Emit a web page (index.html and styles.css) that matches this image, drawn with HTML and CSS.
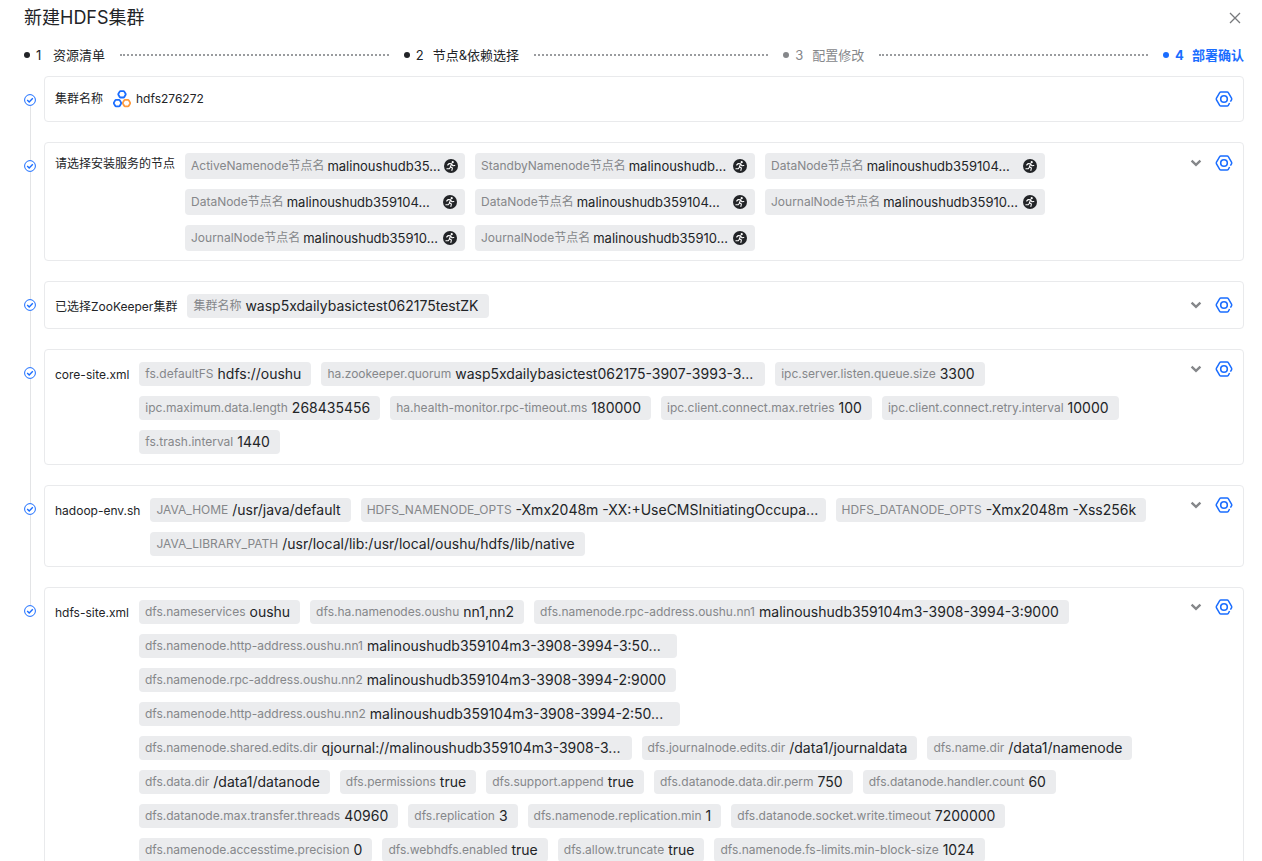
FILE: index.html
```html
<!DOCTYPE html>
<html lang="zh-CN">
<head>
    <meta charset="UTF-8">
    <meta name="viewport" content="width=device-width, initial-scale=1.0">
    <title>新建HDFS集群</title>
    <link rel="stylesheet" href="styles.css">
</head>
<body>
    <svg class="sprite" aria-hidden="true">
        <symbol id="check" viewBox="0 0 12 12">
            <circle cx="6" cy="6" r="5.4" fill="#fff" stroke="#1a6dff" stroke-width="1"/>
            <path d="M3.2 6l2 2 3.6-3.7" fill="none" stroke="#1a6dff" stroke-width="1.4"/>
        </symbol>
        <symbol id="gear" viewBox="0 0 18 18">
            <path d="M14.6 13l-1.300 2.300q-.4.700-1.200.7H5.900q-.8 0-1.200-.7L1.500 10q-.5-1 0-2l3.200-5.300q.4-.7 1.200-.7h6.200q.8 0 1.200.7L16.500 8q.5 1 0 2l-1.100 1.700" fill="none" stroke="#1a6dff" stroke-width="1.500"/>
            <circle cx="9" cy="9" r="3.300" fill="none" stroke="#1a6dff" stroke-width="1.600"/>
        </symbol>
        <symbol id="arrow" viewBox="0 0 12 12">
            <path d="M1.600 3.700L6 7.900l4.400-4.200" fill="none" stroke="#85878a" stroke-width="2.400"/>
        </symbol>
        <symbol id="runner" viewBox="0 0 14 14">
            <circle cx="7" cy="7" r="7" fill="#222427"/>
            <circle cx="8.700" cy="3.200" r="1.100" fill="#fff"/>
            <path d="M3.700 6l1.500-1.500 2.500.4-1.300 2.900 2 1.200-.5 2.400M6.300 8.300L5.300 9.700H2.900M7.800 5.300l1.200 1.500 1.800-.3" fill="none" stroke="#fff" stroke-width="1.100" stroke-linejoin="round" stroke-linecap="round"/>
        </symbol>
    </svg>

    <div class="drawer">
        <header class="header">
            <h1 class="title">新建HDFS集群</h1>
            <button class="icon-btn close" type="button" aria-label="关闭">
                <svg width="12" height="12" viewBox="0 0 12 12"><path d="M1 1l10 10M11 1L1 11" stroke="#77797c" stroke-width="1.3"/></svg>
            </button>
        </header>

        <ol class="steps">
            <li class="step"><span class="dot"></span><span class="num">1</span><span>资源清单</span><span class="step-line"></span></li>
            <li class="step"><span class="dot"></span><span class="num">2</span><span>节点&amp;依赖选择</span><span class="step-line"></span></li>
            <li class="step muted"><span class="dot"></span><span class="num">3</span><span>配置修改</span><span class="step-line"></span></li>
            <li class="step active"><span class="dot"></span><span class="num">4</span><span>部署确认</span></li>
        </ol>

        <main class="timeline">
            <section class="item">
                <div class="rail"><svg class="check"><use href="#check"/></svg></div>
                <div class="card card-name">
                    <h2 class="label">集群名称</h2>
                    <div class="cluster">
                        <svg width="18" height="18" viewBox="0 0 18 18" fill="none" stroke-width="1.800">
                            <path d="M7.500 1.100h3q.5 0 .8.500l1.300 2.200q.3.500 0 1l-1.300 2.200q-.3.500-.8.500h-3q-.5 0-.8-.5L5.400 4.800q-.3-.5 0-1l1.300-2.200q.3-.5.8-.5z" stroke="#1a6dff"/>
                            <path d="M3 9.900h3q.5 0 .8.500l1.300 2.200q.3.500 0 1l-1.300 2.200q-.3.500-.8.500H3q-.5 0-.8-.5L.9 13.600q-.3-.5 0-1l1.300-2.200q.3-.5.8-.5z" stroke="#1a6dff"/>
                            <path d="M12 9.900h3q.5 0 .8.500l1.300 2.200q.3.500 0 1l-1.300 2.200q-.3.500-.8.500h-3q-.5 0-.8-.5l-1.300-2.200q-.3-.5 0-1l1.300-2.200q.3-.5.8-.5z" stroke="#ff9a3c"/>
                        </svg>
                        <span>hdfs276272</span>
                    </div>
                    <div class="actions">
                        <button class="icon-btn" type="button" aria-label="设置"><svg class="gear"><use href="#gear"/></svg></button>
                    </div>
                </div>
            </section>

            <section class="item">
                <div class="rail"><svg class="check"><use href="#check"/></svg></div>
                <div class="card card-nodes">
                    <h2 class="label">请选择安装服务的节点</h2>
                    <ul class="tags">
                        <li class="tag"><span class="key">ActiveNamenode节点名</span><span class="value">malinoushudb35...</span><svg class="runner"><use href="#runner"/></svg></li>
                        <li class="tag"><span class="key">StandbyNamenode节点名</span><span class="value">malinoushudb...</span><svg class="runner"><use href="#runner"/></svg></li>
                        <li class="tag"><span class="key">DataNode节点名</span><span class="value">malinoushudb359104...</span><svg class="runner"><use href="#runner"/></svg></li>
                        <li class="tag"><span class="key">DataNode节点名</span><span class="value">malinoushudb359104...</span><svg class="runner"><use href="#runner"/></svg></li>
                        <li class="tag"><span class="key">DataNode节点名</span><span class="value">malinoushudb359104...</span><svg class="runner"><use href="#runner"/></svg></li>
                        <li class="tag"><span class="key">JournalNode节点名</span><span class="value">malinoushudb35910...</span><svg class="runner"><use href="#runner"/></svg></li>
                        <li class="tag"><span class="key">JournalNode节点名</span><span class="value">malinoushudb35910...</span><svg class="runner"><use href="#runner"/></svg></li>
                        <li class="tag"><span class="key">JournalNode节点名</span><span class="value">malinoushudb35910...</span><svg class="runner"><use href="#runner"/></svg></li>
                    </ul>
                    <div class="actions">
                        <button class="icon-btn" type="button" aria-label="展开"><svg class="arrow"><use href="#arrow"/></svg></button>
                        <button class="icon-btn" type="button" aria-label="设置"><svg class="gear"><use href="#gear"/></svg></button>
                    </div>
                </div>
            </section>

            <section class="item">
                <div class="rail"><svg class="check"><use href="#check"/></svg></div>
                <div class="card card-config card-zk">
                    <h2 class="label">已选择ZooKeeper集群</h2>
                    <ul class="tags">
                        <li class="tag"><span class="key">集群名称</span><span class="value">wasp5xdailybasictest062175testZK</span></li>
                    </ul>
                    <div class="actions">
                        <button class="icon-btn" type="button" aria-label="展开"><svg class="arrow"><use href="#arrow"/></svg></button>
                        <button class="icon-btn" type="button" aria-label="设置"><svg class="gear"><use href="#gear"/></svg></button>
                    </div>
                </div>
            </section>

            <section class="item">
                <div class="rail"><svg class="check"><use href="#check"/></svg></div>
                <div class="card card-config">
                    <h2 class="label">core-site.xml</h2>
                    <ul class="tags">
                        <li class="tag"><span class="key">fs.defaultFS</span><span class="value">hdfs://oushu</span></li>
                        <li class="tag"><span class="key">ha.zookeeper.quorum</span><span class="value long">wasp5xdailybasictest062175-3907-3993-3...</span></li>
                        <li class="tag"><span class="key">ipc.server.listen.queue.size</span><span class="value">3300</span></li>
                        <li class="tag"><span class="key">ipc.maximum.data.length</span><span class="value">268435456</span></li>
                        <li class="tag"><span class="key">ha.health-monitor.rpc-timeout.ms</span><span class="value">180000</span></li>
                        <li class="tag"><span class="key">ipc.client.connect.max.retries</span><span class="value">100</span></li>
                        <li class="tag"><span class="key">ipc.client.connect.retry.interval</span><span class="value">10000</span></li>
                        <li class="tag"><span class="key">fs.trash.interval</span><span class="value">1440</span></li>
                    </ul>
                    <div class="actions">
                        <button class="icon-btn" type="button" aria-label="展开"><svg class="arrow"><use href="#arrow"/></svg></button>
                        <button class="icon-btn" type="button" aria-label="设置"><svg class="gear"><use href="#gear"/></svg></button>
                    </div>
                </div>
            </section>

            <section class="item">
                <div class="rail"><svg class="check"><use href="#check"/></svg></div>
                <div class="card card-config">
                    <h2 class="label">hadoop-env.sh</h2>
                    <ul class="tags">
                        <li class="tag"><span class="key">JAVA_HOME</span><span class="value">/usr/java/default</span></li>
                        <li class="tag"><span class="key">HDFS_NAMENODE_OPTS</span><span class="value long">-Xmx2048m -XX:+UseCMSInitiatingOccupa...</span></li>
                        <li class="tag"><span class="key">HDFS_DATANODE_OPTS</span><span class="value">-Xmx2048m -Xss256k</span></li>
                        <li class="tag"><span class="key">JAVA_LIBRARY_PATH</span><span class="value">/usr/local/lib:/usr/local/oushu/hdfs/lib/native</span></li>
                    </ul>
                    <div class="actions">
                        <button class="icon-btn" type="button" aria-label="展开"><svg class="arrow"><use href="#arrow"/></svg></button>
                        <button class="icon-btn" type="button" aria-label="设置"><svg class="gear"><use href="#gear"/></svg></button>
                    </div>
                </div>
            </section>

            <section class="item">
                <div class="rail"><svg class="check"><use href="#check"/></svg></div>
                <div class="card card-config">
                    <h2 class="label">hdfs-site.xml</h2>
                    <ul class="tags">
                        <li class="tag"><span class="key">dfs.nameservices</span><span class="value">oushu</span></li>
                        <li class="tag"><span class="key">dfs.ha.namenodes.oushu</span><span class="value">nn1,nn2</span></li>
                        <li class="tag"><span class="key">dfs.namenode.rpc-address.oushu.nn1</span><span class="value">malinoushudb359104m3-3908-3994-3:9000</span></li>
                        <li class="tag"><span class="key">dfs.namenode.http-address.oushu.nn1</span><span class="value long">malinoushudb359104m3-3908-3994-3:50...</span></li>
                        <li class="tag"><span class="key">dfs.namenode.rpc-address.oushu.nn2</span><span class="value">malinoushudb359104m3-3908-3994-2:9000</span></li>
                        <li class="tag"><span class="key">dfs.namenode.http-address.oushu.nn2</span><span class="value long">malinoushudb359104m3-3908-3994-2:50...</span></li>
                        <li class="tag"><span class="key">dfs.namenode.shared.edits.dir</span><span class="value long">qjournal://malinoushudb359104m3-3908-3...</span></li>
                        <li class="tag"><span class="key">dfs.journalnode.edits.dir</span><span class="value">/data1/journaldata</span></li>
                        <li class="tag"><span class="key">dfs.name.dir</span><span class="value">/data1/namenode</span></li>
                        <li class="tag"><span class="key">dfs.data.dir</span><span class="value">/data1/datanode</span></li>
                        <li class="tag"><span class="key">dfs.permissions</span><span class="value">true</span></li>
                        <li class="tag"><span class="key">dfs.support.append</span><span class="value">true</span></li>
                        <li class="tag"><span class="key">dfs.datanode.data.dir.perm</span><span class="value">750</span></li>
                        <li class="tag"><span class="key">dfs.datanode.handler.count</span><span class="value">60</span></li>
                        <li class="tag"><span class="key">dfs.datanode.max.transfer.threads</span><span class="value">40960</span></li>
                        <li class="tag"><span class="key">dfs.replication</span><span class="value">3</span></li>
                        <li class="tag"><span class="key">dfs.namenode.replication.min</span><span class="value">1</span></li>
                        <li class="tag"><span class="key">dfs.datanode.socket.write.timeout</span><span class="value">7200000</span></li>
                        <li class="tag"><span class="key">dfs.namenode.accesstime.precision</span><span class="value">0</span></li>
                        <li class="tag"><span class="key">dfs.webhdfs.enabled</span><span class="value">true</span></li>
                        <li class="tag"><span class="key">dfs.allow.truncate</span><span class="value">true</span></li>
                        <li class="tag"><span class="key">dfs.namenode.fs-limits.min-block-size</span><span class="value">1024</span></li>
                    </ul>
                    <div class="actions">
                        <button class="icon-btn" type="button" aria-label="展开"><svg class="arrow"><use href="#arrow"/></svg></button>
                        <button class="icon-btn" type="button" aria-label="设置"><svg class="gear"><use href="#gear"/></svg></button>
                    </div>
                </div>
            </section>
        </main>
    </div>
</body>
</html>
```

FILE: styles.css
```css
* {
    box-sizing: border-box;
}

body {
    margin: 0;
    background-color: #fff;
    color: #222427;
    font-family: Inter, "Noto Sans CJK SC", sans-serif;
    font-size: 12px;
    line-height: 20px;
}

h1, h2, ul, ol {
    margin: 0;
    padding: 0;
    font-weight: 400;
    list-style: none;
}

svg {
    display: block;
    flex: none;
}

.sprite {
    display: none;
}

.drawer {
    height: 100vh;
    padding: 0 18px 0 24px;
    overflow: auto;
    scrollbar-width: none;
}

.icon-btn {
    padding: 0;
    border: 0;
    background: none;
    cursor: pointer;
}

/* header */
.header {
    display: flex;
    align-items: center;
    justify-content: space-between;
    height: 36px;
}

.title {
    font-size: 18px;
    line-height: 24px;
}

.close {
    margin-right: 3px;
}

/* steps */
.steps {
    display: flex;
    margin-bottom: 2px;
    font-size: 13px;
    line-height: 38px;
}

.step {
    display: flex;
    flex: 1;
    align-items: center;
    white-space: nowrap;
}

.step:last-child {
    flex: none;
}

.dot {
    width: 6px;
    height: 6px;
    margin-right: 6px;
    border-radius: 50%;
    background-color: currentColor;
}

.num {
    width: 17px;
}

.step-line {
    flex: 1;
    margin: 0 15px;
    border-top: 2px dotted #9a9c9f;
}

.muted {
    color: #85878a;
}

.active {
    color: #1a6dff;
    font-weight: 700;
}

/* timeline */
.item {
    display: flex;
}

.rail {
    display: flex;
    flex: none;
    flex-direction: column;
    align-items: center;
    width: 12px;
    margin-right: 8px;
}

.rail::before,
.rail::after {
    content: "";
    width: 1px;
    background-color: #e3e4e6;
}

.rail::before {
    height: 18px;
}

.rail::after {
    flex: 1;
}

.item:first-child .rail::before,
.item:last-child .rail::after {
    background: none;
}

.check,
.arrow {
    width: 12px;
    height: 12px;
}

.gear {
    width: 18px;
    height: 18px;
}

.runner {
    width: 14px;
    height: 14px;
    margin-left: auto;
}

/* cards */
.card {
    display: flex;
    flex: 1;
    align-items: flex-start;
    min-width: 0;
    margin-bottom: 20px;
    padding: 10px;
    border: 1px solid #e9eaec;
    border-radius: 4px;
}

.card-name {
    align-items: center;
    height: 46px;
}

.card-nodes {
    padding-bottom: 9px;
}

.label {
    flex: none;
    margin-right: 10px;
    font-size: 12px;
    line-height: 20px;
}

.card-nodes .label {
    line-height: 22px;
}

.cluster {
    display: flex;
    align-items: center;
    gap: 5px;
}

.actions {
    display: flex;
    flex: none;
    align-items: center;
    gap: 13px;
    height: 18px;
    margin-left: auto;
}

.card-nodes .actions {
    height: 20px;
}

.card-zk .actions {
    align-self: center;
}

/* tags */
.tags {
    display: flex;
    flex: 1;
    flex-wrap: wrap;
    gap: 10px;
    min-width: 0;
    margin-right: 10px;
}

.tag {
    display: flex;
    align-items: center;
    gap: 4px;
    height: 24px;
    padding: 0 10px 0 6px;
    border-radius: 4px;
    background-color: #ebecee;
    white-space: nowrap;
}

.key {
    color: #85878a;
}

.value {
    font-size: 14px;
}

.long {
    width: 300px;
}

.card-nodes .tag {
    gap: 3px;
    width: 280px;
    height: 26px;
    padding-right: 8px;
}

.card-nodes .value {
    font-size: 13px;
}

.card-config .label {
    margin-top: 4px;
    line-height: 22px;
}

.card-config .tags {
    margin-top: 2px;
}
```
